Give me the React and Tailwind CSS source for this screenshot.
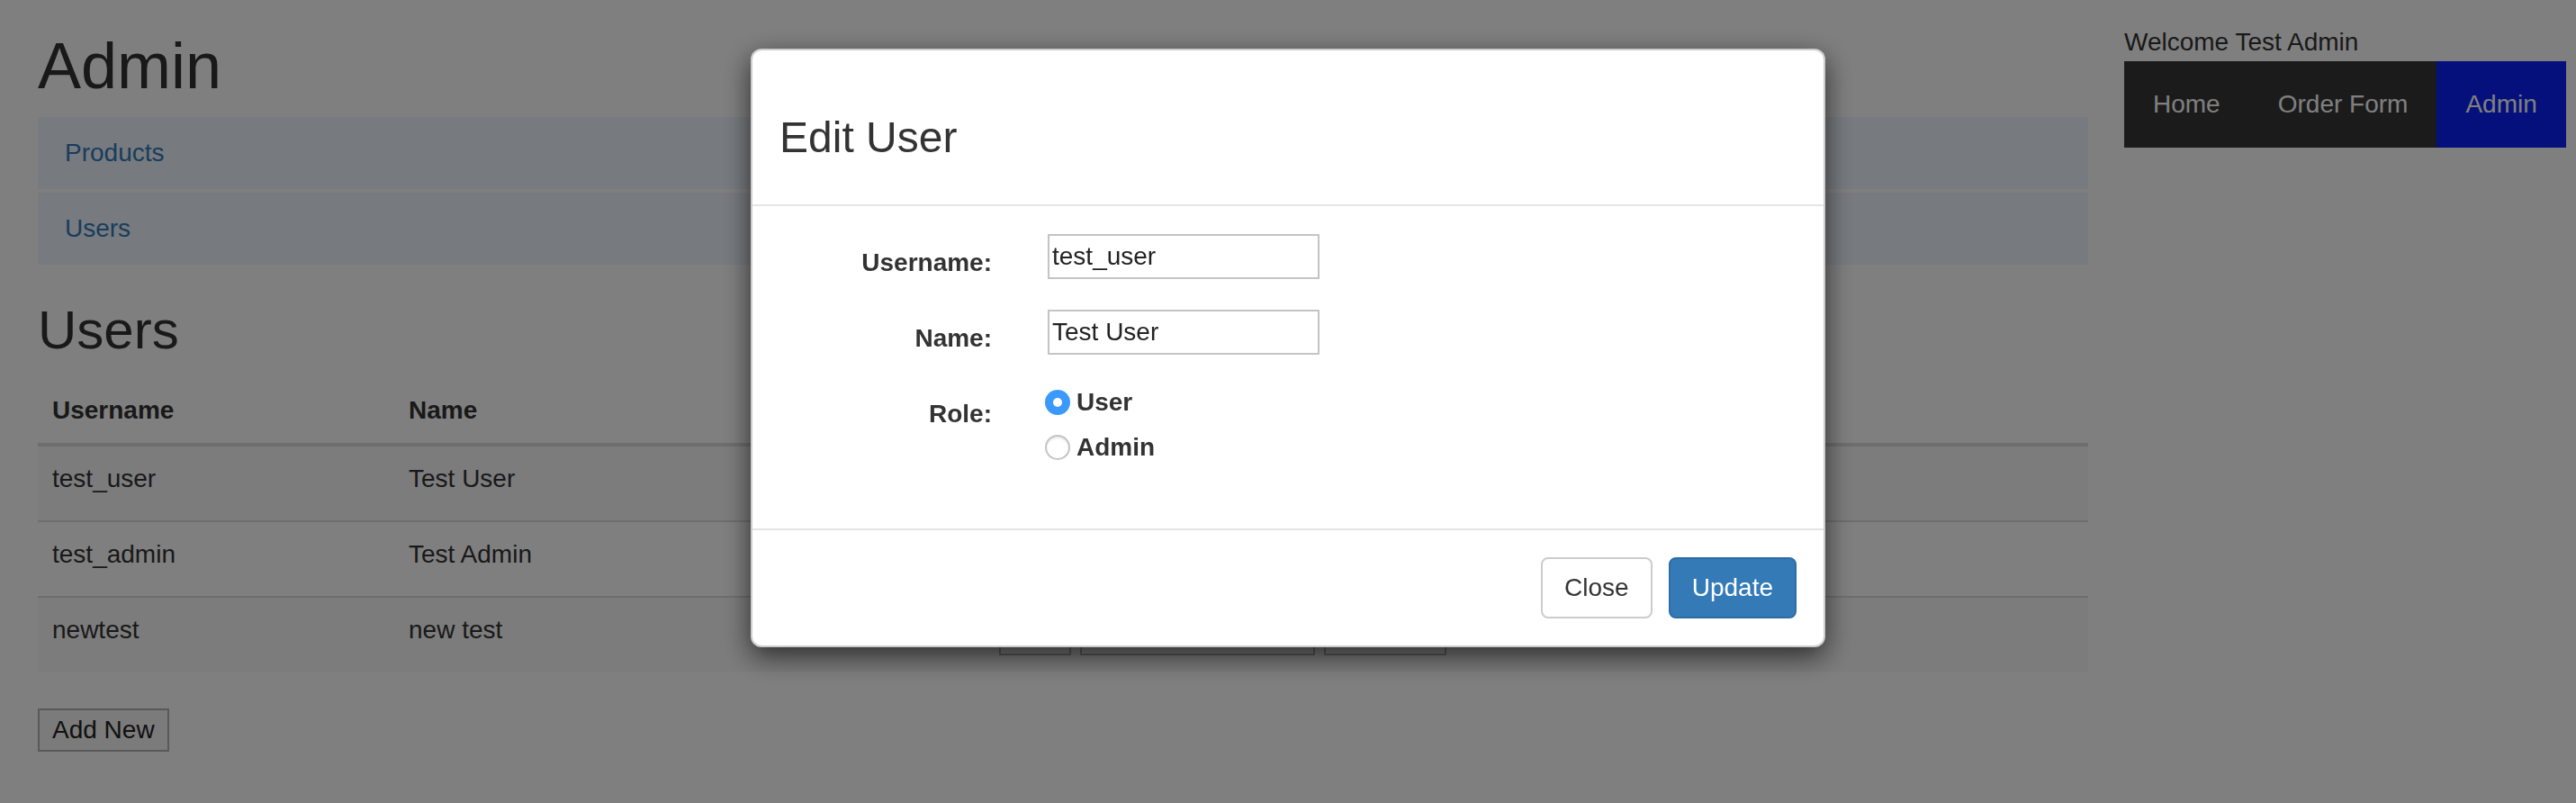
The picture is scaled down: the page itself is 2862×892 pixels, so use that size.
import React from 'react';

const users = [
  { username: 'test_user', name: 'Test User' },
  { username: 'test_admin', name: 'Test Admin' },
  { username: 'newtest', name: 'new test' },
];

const PlainButton = ({ children }) => (
  <button
    type="button"
    className="h-[48px] px-[14px] border-2 border-[#b3b3b3] bg-[#f7f7f7] text-[#222] leading-[40px]"
  >
    {children}
  </button>
);

const Radio = ({ checked, label }) => (
  <label className="flex items-center h-[40px] font-bold ml-[-3px]">
    {checked ? (
      <span className="w-[28px] h-[28px] rounded-full bg-[#3b99fc] flex items-center justify-center">
        <span className="w-[10px] h-[10px] rounded-full bg-white" />
      </span>
    ) : (
      <span className="w-[28px] h-[28px] rounded-full bg-white border-2 border-[#c4c4c4] shadow-[inset_0_2px_2px_rgba(0,0,0,0.08)]" />
    )}
    <span className="ml-[7px] leading-[40px]">{label}</span>
  </label>
);

const FormRow = ({ label, children }) => (
  <div className="flex items-start">
    <div className="w-[236px] text-right font-bold pt-[12px] leading-[40px]">{label}</div>
    <div className="ml-[62px]">{children}</div>
  </div>
);

export default function App() {
  return (
    <div className="relative min-h-screen bg-white text-[#333] text-[28px] font-['Liberation_Sans',Arial,sans-serif]">
      <div className="flex">
        {/* main column */}
        <div className="ml-[42px] w-[2278px]">
          <h1 className="mt-[34px] text-[72px] leading-[79px] font-normal">Admin</h1>

          <div className="mt-[17px] flex flex-col gap-[4px]">
            <a className="block h-[80px] px-[30px] py-[20px] leading-[40px] bg-[#eff5ff] text-[#337ab7]">Products</a>
            <a className="block h-[80px] px-[30px] py-[20px] leading-[40px] bg-[#eff5ff] text-[#337ab7]">Users</a>
          </div>

          <h2 className="mt-[40px] mb-[20px] text-[60px] leading-[66px] font-normal">Users</h2>

          <div>
            <div className="flex h-[76px] pt-[16px] border-b-4 border-[#ddd] font-bold leading-[40px]">
              <div className="w-[396px] pl-[16px]">Username</div>
              <div className="w-[656px] pl-[16px]">Name</div>
              <div className="flex-1 pl-[16px]" />
            </div>
            {users.map((u, i) => (
              <div
                key={u.username}
                className={`flex pt-[16px] leading-[40px] ${i === 0 ? 'h-[82px]' : 'h-[84px] border-t-2 border-[#ddd]'} ${
                  i % 2 === 0 ? 'bg-[#f9f9f9]' : ''
                }`}
              >
                <div className="w-[396px] pl-[16px]">{u.username}</div>
                <div className="w-[656px] pl-[16px]">{u.name}</div>
                <div className="flex-1 pl-[16px] flex gap-[10px]">
                  <PlainButton>Edit</PlainButton>
                  <PlainButton>Change Password</PlainButton>
                  <PlainButton>Remove</PlainButton>
                </div>
              </div>
            ))}
          </div>

          <div className="mt-[41px]">
            <PlainButton>Add New</PlainButton>
          </div>
        </div>

        {/* side column */}
        <div className="ml-[40px] w-[492px]">
          <div className="mt-[27px] leading-[40px]">Welcome Test Admin</div>
          <nav className="mt-[1px] inline-flex h-[96px] bg-[#363636] text-white">
            <a className="px-[32px] flex items-center">Home</a>
            <a className="px-[32px] flex items-center">Order Form</a>
            <a className="px-[32px] flex items-center bg-[#0a20fa]">Admin</a>
          </nav>
        </div>
      </div>

      {/* backdrop */}
      <div className="fixed inset-0 bg-[rgba(0,0,0,0.5)]" />

      {/* modal */}
      <div className="fixed inset-0 pt-[54px]">
        <div className="mx-auto w-[1194px] bg-white border-2 border-black/20 rounded-[12px] shadow-[0_10px_30px_rgba(0,0,0,0.65)]">
          <div className="px-[30px] pt-[70px] pb-[48px] border-b-2 border-[#e5e5e5]">
            <h3 className="text-[48px] leading-[53px] font-normal">Edit User</h3>
          </div>

          <div className="px-[30px] pt-[31px] pb-[70px] flex flex-col gap-[32px]">
            <FormRow label="Username:">
              <input
                readOnly
                value="test_user"
                className="w-[302px] h-[50px] border-2 border-[#c4c4c4] pl-[3px] text-[#222] outline-none"
              />
            </FormRow>
            <FormRow label="Name:">
              <input
                readOnly
                value="Test User"
                className="w-[302px] h-[50px] border-2 border-[#c4c4c4] pl-[3px] text-[#222] outline-none"
              />
            </FormRow>
            <div className="flex items-start">
              <div className="w-[236px] text-right font-bold pt-[12px] leading-[40px]">Role:</div>
              <div className="ml-[62px] mt-[-1px] flex flex-col gap-[10px]">
                <Radio checked label="User" />
                <Radio label="Admin" />
              </div>
            </div>
          </div>

          <div className="px-[30px] py-[30px] border-t-2 border-[#e5e5e5] flex justify-end gap-[18px]">
            <button
              type="button"
              className="h-[68px] px-[24px] border-2 border-[#ccc] rounded-[8px] bg-white text-[#333]"
            >
              Close
            </button>
            <button
              type="button"
              className="h-[68px] px-[24px] border-2 border-[#2e6da4] rounded-[8px] bg-[#337ab7] text-white"
            >
              Update
            </button>
          </div>
        </div>
      </div>
    </div>
  );
}
